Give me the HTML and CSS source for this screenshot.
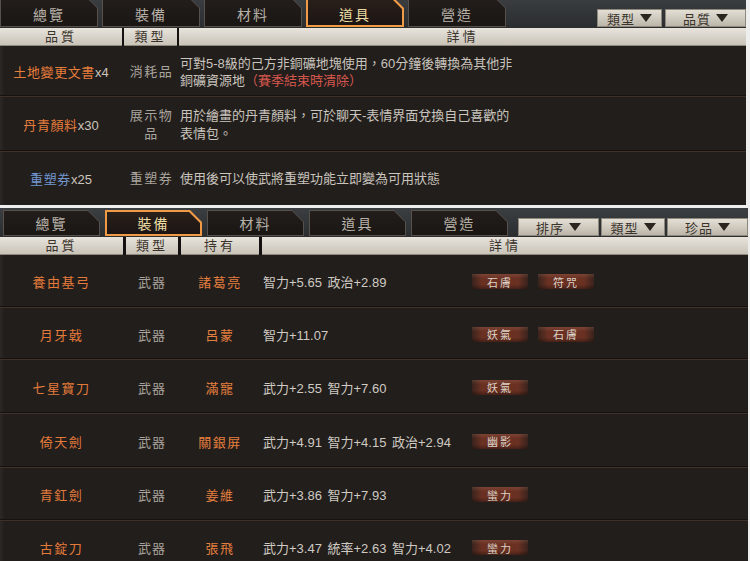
FILE: index.html
```html
<!DOCTYPE html>
<html lang="zh-Hant">
<head>
<meta charset="utf-8">
<title>背包</title>
<link rel="stylesheet" href="styles.css">
</head>
<body>
<div class="panel top">
  <div class="tabbar">
    <div class="tabs">
      <div class="tab"><span>總覽</span></div>
      <div class="tab"><span>裝備</span></div>
      <div class="tab"><span>材料</span></div>
      <div class="tab active"><span>道具</span></div>
      <div class="tab"><span>營造</span></div>
    </div>
    <div class="filters">
      <div class="dd w65">類型<i class="tri"></i></div>
      <div class="dd w81">品質<i class="tri"></i></div>
    </div>
  </div>
  <div class="thead cols-a">
    <div>品質</div><div>類型</div><div>詳情</div>
  </div>
  <div class="row cols-a r1">
    <div class="name"><span class="orange">土地變更文書</span><span class="cnt">x4</span></div>
    <div class="type">消耗品</div>
    <div class="detail"><span class="ln">可對5-8級的己方非銅礦地塊使用，60分鐘後轉換為其他非</span><span class="ln">銅礦資源地<span class="red">（賽季結束時清除）</span></span></div>
  </div>
  <div class="row cols-a r2">
    <div class="name"><span class="orange">丹青顏料</span><span class="cnt">x30</span></div>
    <div class="type">展示物品</div>
    <div class="detail"><span class="ln">用於繪畫的丹青顏料，可於聊天-表情界面兌換自己喜歡的</span><span class="ln">表情包。</span></div>
  </div>
  <div class="row cols-a r3">
    <div class="name"><span class="blue">重塑券</span><span class="cnt">x25</span></div>
    <div class="type">重塑券</div>
    <div class="detail"><span class="ln">使用後可以使武將重塑功能立即變為可用狀態</span></div>
  </div>
</div>
<div class="sep"></div>
<div class="panel bottom">
  <div class="tabbar">
    <div class="tabs">
      <div class="tab"><span>總覽</span></div>
      <div class="tab active"><span>裝備</span></div>
      <div class="tab"><span>材料</span></div>
      <div class="tab"><span>道具</span></div>
      <div class="tab"><span>營造</span></div>
    </div>
    <div class="filters">
      <div class="dd w81">排序<i class="tri"></i></div>
      <div class="dd w64">類型<i class="tri"></i></div>
      <div class="dd w81">珍品<i class="tri"></i></div>
    </div>
  </div>
  <div class="thead cols-b">
    <div>品質</div><div>類型</div><div>持有</div><div>詳情</div>
  </div>
  <div class="row cols-b h53">
    <div class="ename">養由基弓</div><div class="etype">武器</div><div class="owner">諸葛亮</div>
    <div class="edetail"><span class="stats">智力+5.65 政治+2.89</span><span class="tag">石膚</span><span class="tag">符咒</span></div>
  </div>
  <div class="row cols-b h52">
    <div class="ename">月牙戟</div><div class="etype">武器</div><div class="owner">呂蒙</div>
    <div class="edetail"><span class="stats">智力+11.07</span><span class="tag">妖氣</span><span class="tag">石膚</span></div>
  </div>
  <div class="row cols-b h54">
    <div class="ename">七星寶刀</div><div class="etype">武器</div><div class="owner">滿寵</div>
    <div class="edetail"><span class="stats">武力+2.55 智力+7.60</span><span class="tag">妖氣</span></div>
  </div>
  <div class="row cols-b h54">
    <div class="ename">倚天劍</div><div class="etype">武器</div><div class="owner">關銀屏</div>
    <div class="edetail"><span class="stats">武力+4.91 智力+4.15 政治+2.94</span><span class="tag">幽影</span></div>
  </div>
  <div class="row cols-b h53">
    <div class="ename">青釭劍</div><div class="etype">武器</div><div class="owner">姜維</div>
    <div class="edetail"><span class="stats">武力+3.86 智力+7.93</span><span class="tag">蠻力</span></div>
  </div>
  <div class="row cols-b h53">
    <div class="ename">古錠刀</div><div class="etype">武器</div><div class="owner">張飛</div>
    <div class="edetail"><span class="stats">武力+3.47 統率+2.63 智力+4.02</span><span class="tag">蠻力</span></div>
  </div>
</div>
</body>
</html>
```
FILE: styles.css
```css
* { box-sizing: border-box; }
html, body { margin: 0; padding: 0; }
body {
  width: 750px;
  height: 561px;
  overflow: hidden;
  background: #eeeeee;
  font-family: "Liberation Sans", "Noto Sans CJK TC", sans-serif;
  font-size: 13px;
}

.panel {
  background: #221e1c;
  overflow: hidden;
  box-shadow: inset 4px 0 4px -2px rgba(255,255,255,0.06);
}
.panel.top { width: 746px; height: 209px; margin-top: -4px; }
.panel.bottom { width: 748px; height: 356px; }
.sep { height: 3px; }

/* tab bar */
.tabbar {
  display: flex;
  align-items: flex-end;
  padding-bottom: 1px;
  background: linear-gradient(#3b3f42, #2b2d2f);
}
.top .tabbar { height: 32px; }
.bottom .tabbar { height: 29px; padding-left: 3px; }

.tabs { display: flex; align-items: flex-end; }
.top .tabs { gap: 4px; }
.bottom .tabs { gap: 5px; }

.tab {
  background: #57504b;
  padding: 1px;
  clip-path: polygon(0 0, calc(100% - 12px) 0, 100% 12px, 100% 100%, 0 100%);
}
.top .tab { width: 98px; height: 31px; }
.bottom .tab { width: 97px; height: 26px; }
.tab span {
  display: flex;
  align-items: center;
  justify-content: center;
  height: 100%;
  background: linear-gradient(#231e1c, #1a1614);
  clip-path: polygon(0 0, calc(100% - 11px) 0, 100% 11px, 100% 100%, 0 100%);
  color: #b7b1a7;
  font-size: 14px;
  letter-spacing: 2px;
}
.top .tab span { padding-top: 4px; }
.tab.active { background: #f09a45; padding: 2px; }
.tab.active span { color: #ecdca4; background: linear-gradient(#2a201b, #1b1513); }

/* filters */
.filters { margin-left: auto; display: flex; gap: 3px; }
.bottom .filters { gap: 2px; }
.dd {
  height: 18px;
  display: flex;
  align-items: center;
  justify-content: center;
  gap: 5px;
  background: linear-gradient(#e4dfd5, #bcb6aa);
  border: 1px solid #8d877c;
  color: #3b342d;
  font-size: 13px;
  letter-spacing: 1px;
}
.w64 { width: 64px; }
.w65 { width: 65px; }
.w81 { width: 81px; }
.tri {
  width: 0;
  height: 0;
  border-left: 6px solid transparent;
  border-right: 6px solid transparent;
  border-top: 8px solid #2b2520;
}

/* table header */
.thead {
  display: grid;
  height: 18px;
  background: #141110;
}
.thead div {
  background: linear-gradient(#e8e4dc, #c9c3b8);
  border-bottom: 1px solid #8e877c;
  color: #3a332c;
  font-size: 13px;
  line-height: 17px;
  text-align: center;
  letter-spacing: 3px;
}
.cols-a { grid-template-columns: 122px 53px 1fr; column-gap: 2px; }
.cols-b { grid-template-columns: 123px 52px 78px 1fr; column-gap: 3px; }

/* rows */
.row {
  display: grid;
  align-items: center;
  box-shadow: inset 0 -1px #3d3129, inset 0 -2px #161211;
}
.r1 { height: 51px; }
.r2 { height: 55px; }
.r3 { height: 53px; box-shadow: none; }
.h52 { height: 52px; }
.h53 { height: 53px; }
.h54 { height: 54px; }

.name { text-align: center; font-size: 13px; letter-spacing: 0.6px; }
.orange { color: #e57d3b; }
.blue { color: #7297cf; }
.cnt { color: #cbc4bb; letter-spacing: 0; }
.type {
  text-align: center;
  color: #aaa59e;
  font-size: 13px;
  letter-spacing: 1.5px;
  line-height: 18px;
  padding-left: 2px;
}
.detail {
  padding-left: 1px;
  color: #c9c4bc;
  font-size: 13px;
  letter-spacing: 0;
  line-height: 17px;
}
.r2 .detail { line-height: 18px; }
.ln { display: block; white-space: nowrap; }
.red { color: #d6574d; }

.ename {
  text-align: center;
  color: #e27b3a;
  font-size: 13px;
  letter-spacing: 1.5px;
}
.etype {
  text-align: center;
  color: #a7a29b;
  font-size: 13px;
  letter-spacing: 1px;
}
.owner {
  text-align: center;
  color: #e47f3e;
  font-size: 13px;
  letter-spacing: 1.5px;
}
.edetail {
  display: flex;
  align-items: center;
  padding-left: 1px;
  color: #cfcac2;
  font-size: 13px;
}
.stats { width: 209px; white-space: nowrap; word-spacing: 2px; }
.tag {
  width: 56px;
  height: 15px;
  margin-right: 10px;
  display: flex;
  align-items: center;
  justify-content: center;
  color: #ddd3c8;
  font-size: 11px;
  letter-spacing: 2px;
  background:
    linear-gradient(rgba(255,200,170,0.12), rgba(0,0,0,0) 30%, rgba(0,0,0,0) 70%, rgba(0,0,0,0.35)),
    linear-gradient(90deg, rgba(100,45,30,0.35), #6a3123 18%, #6a3123 82%, rgba(100,45,30,0.35));
}
```
